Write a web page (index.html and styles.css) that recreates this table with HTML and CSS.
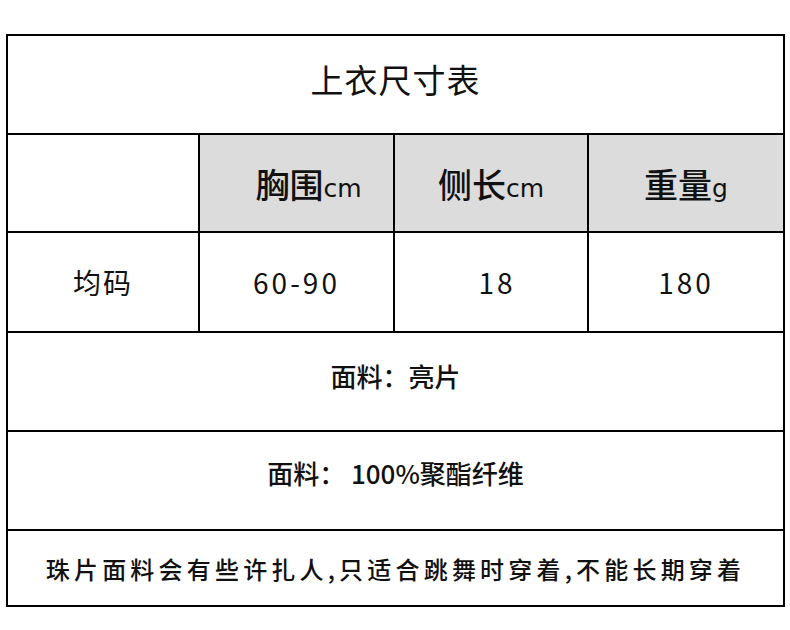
FILE: index.html
```html
<!DOCTYPE html>
<html lang="zh-CN">
<head>
<meta charset="utf-8">
<title>上衣尺寸表</title>
<link rel="stylesheet" href="styles.css">
</head>
<body>
<div class="chart">
  <div class="cell title span4">上衣尺寸表</div>
  <div class="cell blank"></div>
  <div class="cell head shift">胸围<span class="unit">cm</span></div>
  <div class="cell head">侧长<span class="unit">cm</span></div>
  <div class="cell head">重量<span class="unit">g</span></div>
  <div class="cell label">均码</div>
  <div class="cell num">60-90</div>
  <div class="cell num shift-sm">18</div>
  <div class="cell num">180</div>
  <div class="cell note span4 n1">面料：亮片</div>
  <div class="cell note span4 n2">面料：&nbsp;100%聚酯纤维</div>
  <div class="cell note span4 n3">珠片面料会有些许扎人,只适合跳舞时穿着,不能长期穿着</div>
</div>
</body>
</html>
```
FILE: styles.css
```css
html, body {
  margin: 0;
  padding: 0;
  background: #ffffff;
}
body {
  font-family: "Noto Sans CJK SC", "Noto Sans", sans-serif;
  color: #111111;
}
.chart {
  margin: 34px 0 0 6px;
  width: 779px;
  box-sizing: border-box;
  display: grid;
  grid-template-columns: 190px 193px 192px 194px;
  grid-template-rows: 97px 96px 98px 97px 97px 74px;
  gap: 2px;
  padding: 2px;
  background: #000000;
}
.cell {
  background: #ffffff;
  display: flex;
  align-items: center;
  justify-content: center;
  white-space: nowrap;
  box-sizing: border-box;
}
.span4 {
  grid-column: 1 / span 4;
}
.title {
  font-size: 33px;
  letter-spacing: 1px;
  padding-bottom: 12px;
}
.head {
  background: #dcdcdc;
  font-size: 34px;
  font-weight: 500;
}
.shift {
  padding-left: 24px;
}
.shift-sm {
  padding-left: 12px;
}
.unit {
  font-family: "DejaVu Sans", sans-serif;
  font-size: 25px;
  font-weight: 400;
  margin-top: 10px;
}
.label {
  font-size: 28px;
  letter-spacing: 2px;
}
.num {
  font-size: 28px;
  letter-spacing: 3px;
}
.n1 {
  font-size: 26px;
  font-weight: 500;
  padding-bottom: 12px;
}
.n2 {
  font-size: 26px;
  font-weight: 500;
  padding-bottom: 16px;
}
.n3 {
  font-size: 24px;
  font-weight: 500;
  letter-spacing: 4.2px;
}
```
